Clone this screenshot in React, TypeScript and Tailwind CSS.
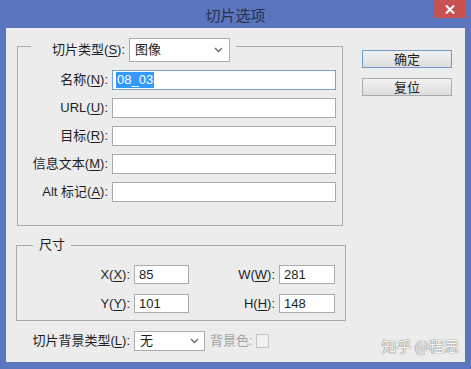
import React from 'react';

function Key({ children }: { children: React.ReactNode }) {
  return <span className="underline underline-offset-[2px]">{children}</span>;
}

function Chevron() {
  return (
    <svg width="9" height="6" viewBox="0 0 9 6" className="shrink-0">
      <polyline points="1,1 4.5,4.5 8,1" fill="none" stroke="#666" strokeWidth="1.3" />
    </svg>
  );
}

function Field({ label, width, children }: { label: React.ReactNode; width: string; children?: React.ReactNode }) {
  return (
    <div className="flex items-center h-[20px]">
      <div className={`${width} text-right whitespace-nowrap`}>{label}</div>
      <div className="ml-[4px] w-[224px] h-[20px] bg-white border border-[#ababab] flex items-center">{children}</div>
    </div>
  );
}

export default function App() {
  return (
    <div className="w-[471px] h-[369px] bg-[#5b76bf] flex flex-col font-['Liberation_Sans','Noto_Sans_CJK_SC',sans-serif] text-[13px] text-[#1e1e1e] overflow-hidden">
      {/* Title bar */}
      <div className="h-[28px] relative flex items-center justify-center">
        <span className="text-[15px] text-[#27304d] font-['Noto_Sans_CJK_SC',sans-serif] leading-none">切片选项</span>
        <div className="absolute right-[6px] top-0 w-[31px] h-[18px] bg-[#c75050] flex items-center justify-center">
          <svg width="10" height="9" viewBox="0 0 10 9">
            <path d="M1 0.5 L9 8.5 M9 0.5 L1 8.5" stroke="white" strokeWidth="2" />
          </svg>
        </div>
      </div>

      {/* Client area */}
      <div className="mx-[6px] h-[334px] bg-[#ececec] flex relative">
        <div className="w-[340px] flex flex-col">
          {/* Slice group */}
          <fieldset className="mt-[2px] ml-[11px] w-[326px] border border-[#a9a9a9] px-0 pt-[8px] pb-[23px] m-0">
            <legend className="ml-[13px] pl-[20px] pr-[6px] pt-[8px]">
              <div className="flex items-center h-[24px]">
                <div className="w-[74px] text-right whitespace-nowrap">切片类型(<Key>S</Key>):</div>
                <div className="ml-[4px] w-[101px] h-[24px] bg-white border border-[#acacac] flex items-center justify-between pl-[5px] pr-[6px]">
                  <span>图像</span>
                  <Chevron />
                </div>
              </div>
            </legend>
            <div className="flex flex-col gap-[8px]">
              <div className="flex items-center h-[20px]">
                <div className="w-[90px] text-right whitespace-nowrap">名称(<Key>N</Key>):</div>
                <div className="ml-[4px] w-[224px] h-[20px] bg-white border border-[#7ba2cf] flex items-center">
                  <span className="ml-[3px] bg-[#3399ff] text-white px-[1px] leading-[16px]">08_03</span>
                </div>
              </div>
              <Field width="w-[90px]" label={<>URL(<Key>U</Key>):</>} />
              <Field width="w-[90px]" label={<>目标(<Key>R</Key>):</>} />
              <Field width="w-[90px]" label={<>信息文本(<Key>M</Key>):</>} />
              <Field width="w-[90px]" label={<>Alt 标记(<Key>A</Key>):</>} />
            </div>
          </fieldset>

          {/* Size group */}
          <fieldset className="mt-[11px] ml-[10px] w-[330px] border border-[#a9a9a9] px-0 pt-[12px] pb-[7px] m-0">
            <legend className="ml-[16px] px-[6px] leading-[16px]">尺寸</legend>
            <div className="flex flex-col gap-[10px]">
              <div className="flex items-center h-[19px]">
                <div className="w-[113px] text-right">X(<Key>X</Key>):</div>
                <div className="ml-[4px] w-[55px] h-[19px] bg-white border border-[#ababab] flex items-center pl-[4px]">85</div>
                <div className="w-[86px] text-right">W(<Key>W</Key>):</div>
                <div className="ml-[4px] w-[56px] h-[19px] bg-white border border-[#ababab] flex items-center pl-[4px]">281</div>
              </div>
              <div className="flex items-center h-[19px]">
                <div className="w-[113px] text-right">Y(<Key>Y</Key>):</div>
                <div className="ml-[4px] w-[55px] h-[19px] bg-white border border-[#ababab] flex items-center pl-[4px]">101</div>
                <div className="w-[86px] text-right">H(<Key>H</Key>):</div>
                <div className="ml-[4px] w-[56px] h-[19px] bg-white border border-[#ababab] flex items-center pl-[4px]">148</div>
              </div>
            </div>
          </fieldset>

          {/* Background type */}
          <div className="mt-[10px] ml-[10px] flex items-center h-[20px]">
            <div className="w-[114px] text-right whitespace-nowrap">切片背景类型(<Key>L</Key>):</div>
            <div className="ml-[4px] w-[71px] h-[20px] bg-white border border-[#acacac] flex items-center justify-between pl-[5px] pr-[5px]">
              <span>无</span>
              <Chevron />
            </div>
            <span className="ml-[5px] text-[#a3a3a3] whitespace-nowrap">背景色:</span>
            <div className="ml-[3px] w-[13px] h-[14px] border border-[#c2c2c2] bg-[#f1f1f1]" />
          </div>
        </div>

        {/* Buttons */}
        <div className="pl-[16px] pt-[22px] flex flex-col gap-[10px]">
          <div className="w-[90px] h-[18px] border border-[#6f9bcb] bg-gradient-to-b from-[#f2f2f2] to-[#dddddd] flex items-center justify-center leading-none">确定</div>
          <div className="w-[90px] h-[18px] border border-[#acacac] bg-gradient-to-b from-[#f2f2f2] to-[#dddddd] flex items-center justify-center leading-none">复位</div>
        </div>

        {/* Watermark */}
        <div className="absolute right-[6px] bottom-[5px] text-[15px] text-[#f6f6f6] font-['Noto_Sans_CJK_SC',sans-serif] [text-shadow:0_0_1px_#6e6e6e,0_0_1px_#6e6e6e] whitespace-nowrap">知乎 @程思</div>
      </div>
    </div>
  );
}
